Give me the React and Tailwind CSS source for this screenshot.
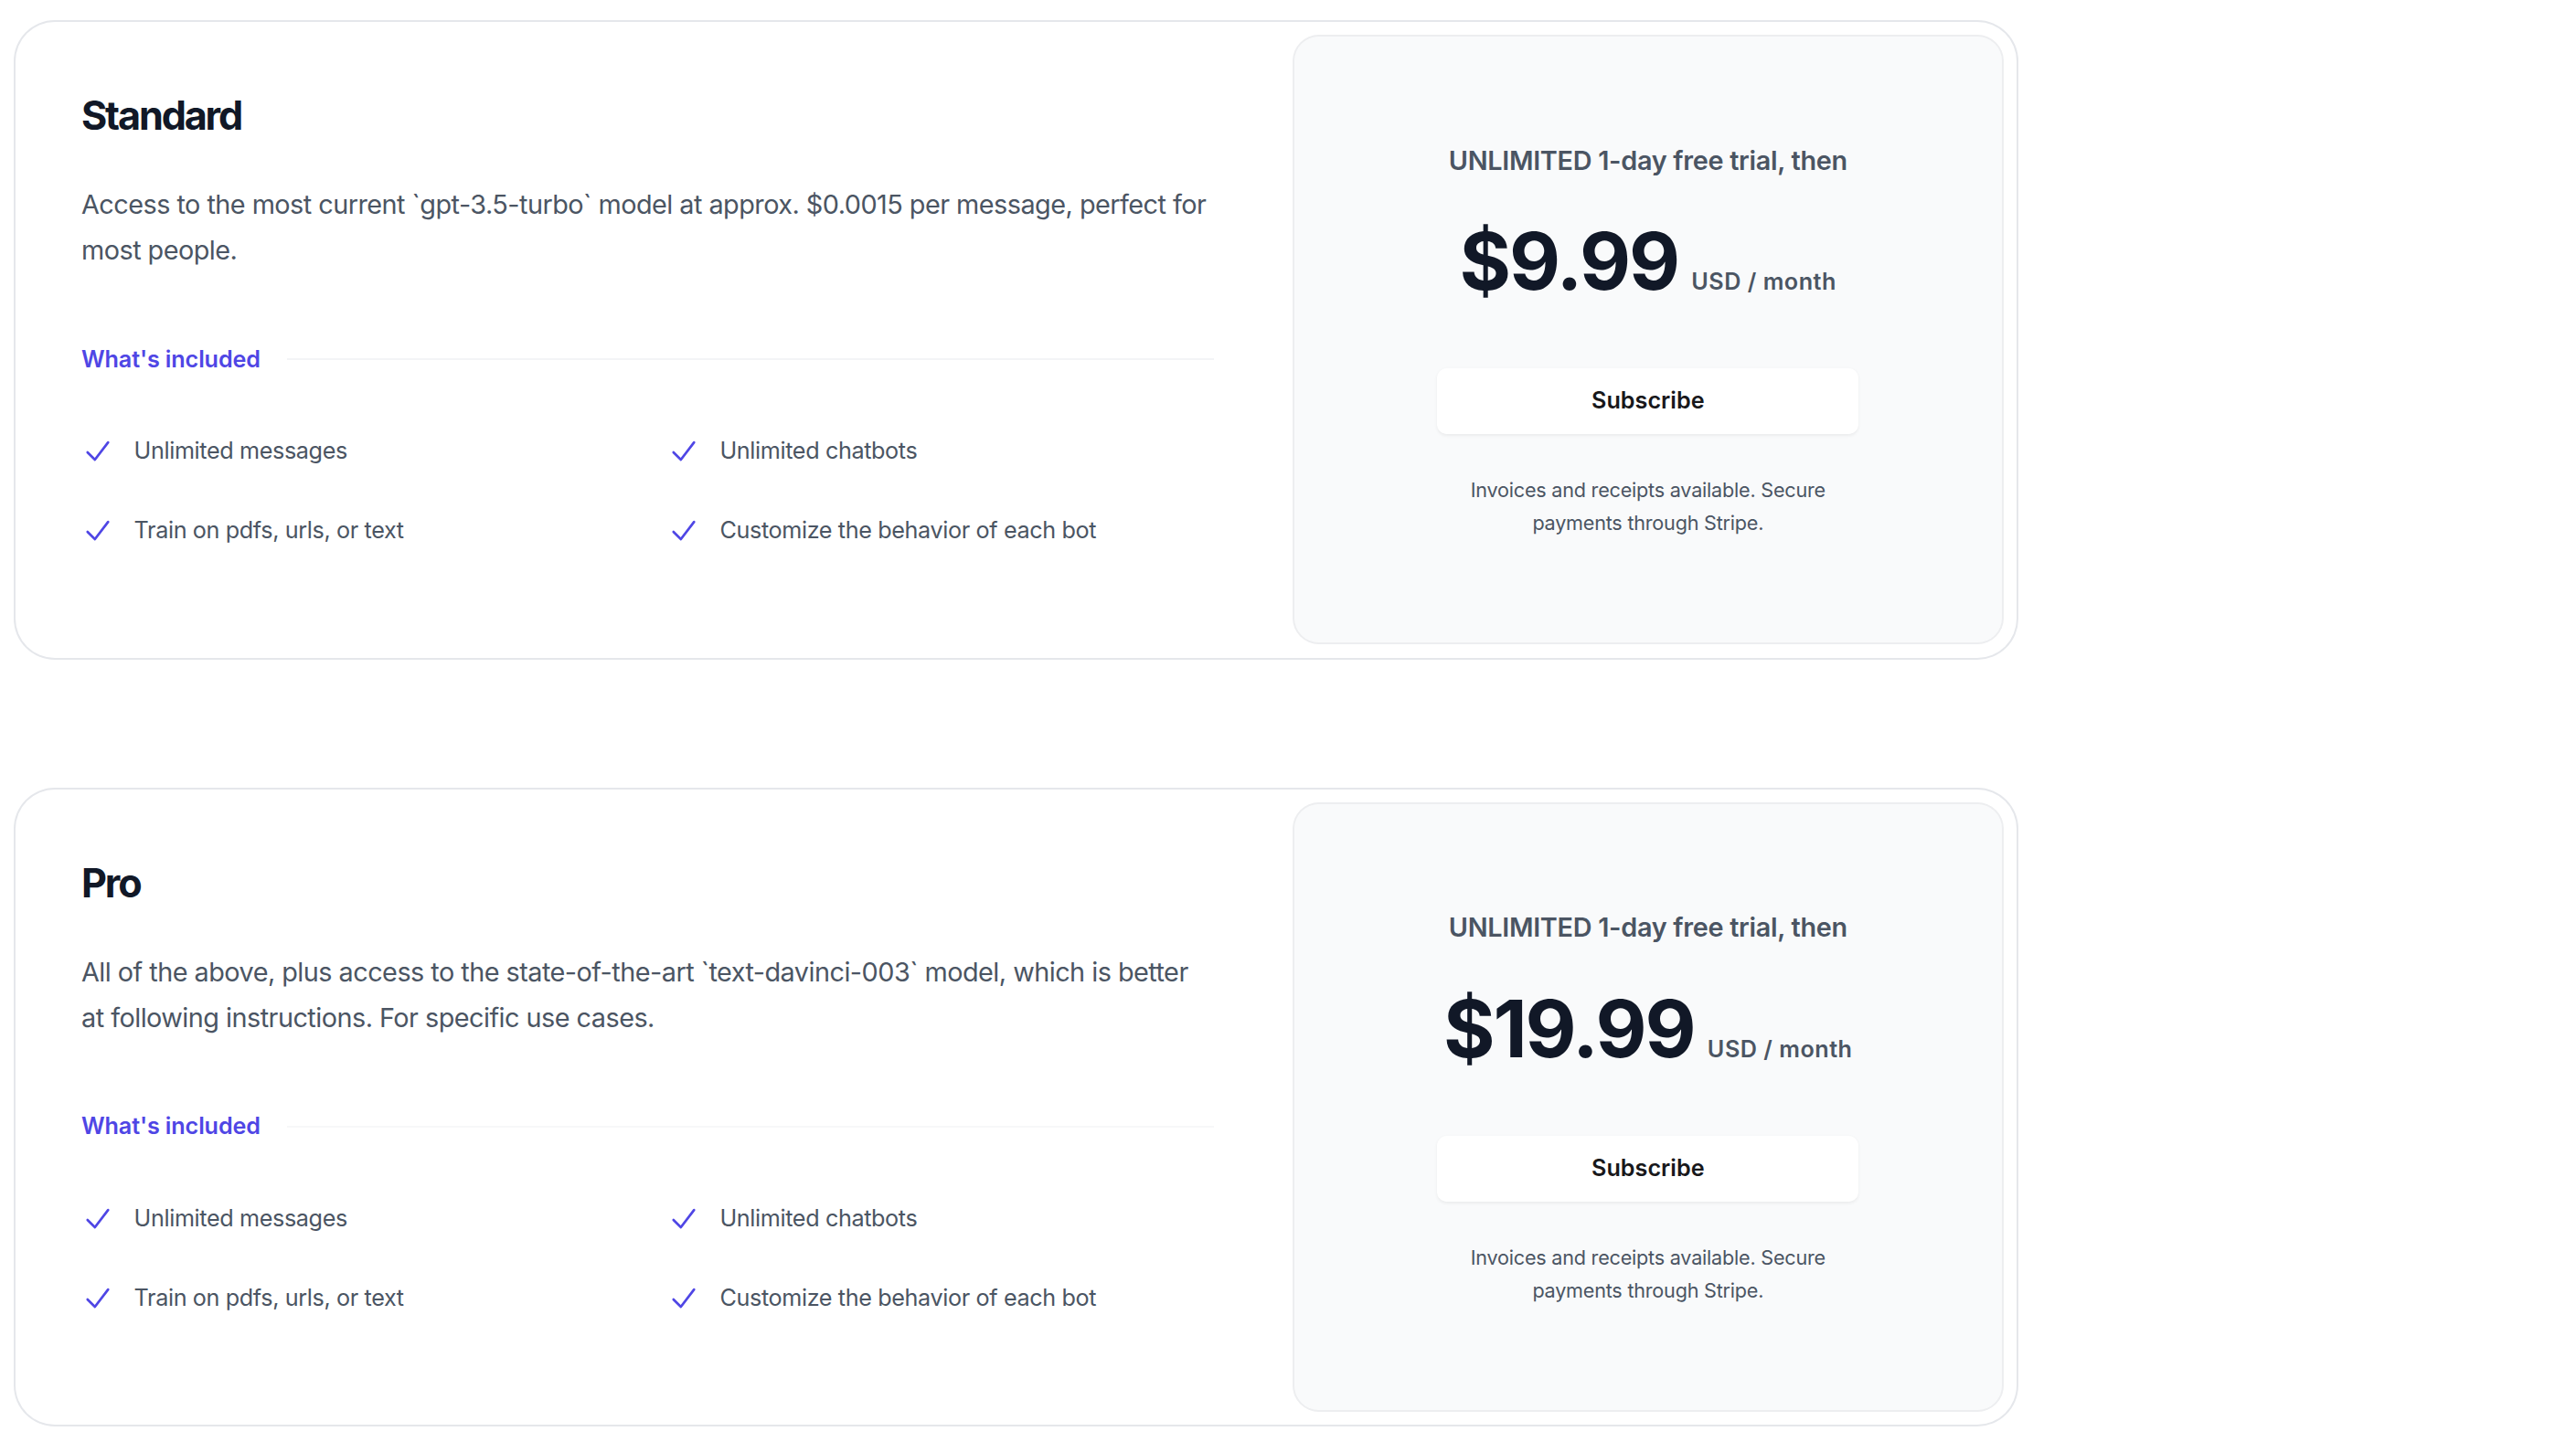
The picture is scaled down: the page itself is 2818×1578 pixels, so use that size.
import React from "react";

const features = [
  "Unlimited messages",
  "Unlimited chatbots",
  "Train on pdfs, urls, or text",
  "Customize the behavior of each bot",
];

function Check() {
  return (
    <svg viewBox="0 0 20 20" fill="currentColor" className="h-[43.2px] w-[36px] flex-none text-[#4f46e5]" aria-hidden="true">
      <path
        fillRule="evenodd"
        d="M16.704 4.153a.75.75 0 01.143 1.052l-8 10.5a.75.75 0 01-1.127.075l-4.5-4.5a.75.75 0 011.06-1.06l3.894 3.893 7.48-9.817a.75.75 0 011.05-.143z"
        clipRule="evenodd"
      />
    </svg>
  );
}

function Plan({ name, desc, price, lineColor }) {
  return (
    <div className="flex w-[2189px] rounded-[43px] bg-white shadow-[0_0_0_2px_#e5e7eb]">
      <div className="flex-auto px-[72px] pt-[74px] pb-[72px]">
        <h3 className="text-[43.2px] leading-[57.6px] font-bold tracking-[-0.05em] text-[#111827]">{name}</h3>
        <p className="mt-[43.2px] text-[28.8px] leading-[50.4px] tracking-[-0.018em] text-[#4b5563]">{desc}</p>
        <div className="mt-[72px] flex items-center gap-x-[28.8px]">
          <h4 className="flex-none text-[25.2px] leading-[43.2px] font-semibold tracking-[-0.005em] text-[#4f46e5]">What's included</h4>
          <div className={"h-[2px] flex-auto " + lineColor} />
        </div>
        <ul className="mt-[57.6px] grid grid-cols-2 gap-[43.2px] text-[25.2px] leading-[43.2px] tracking-[-0.015em] text-[#4b5563]">
          {features.map((f) => (
            <li key={f} className="flex gap-x-[21.6px]">
              <Check />
              {f}
            </li>
          ))}
        </ul>
      </div>
      <div className="w-[806.4px] flex-shrink-0 p-[14.4px]">
        <div className="flex h-full flex-col justify-center rounded-[28.8px] bg-[#f9fafb] py-[115.2px] text-center shadow-[inset_0_0_0_2px_rgba(17,24,39,0.05)]">
          <div className="mx-auto max-w-[576px] px-[57.6px]">
            <p className="text-[28.8px] leading-[43.2px] font-semibold tracking-[-0.01em] text-[#4b5563]">UNLIMITED 1-day free trial, then</p>
            <p className="mt-[43.2px] flex items-baseline justify-center gap-x-[14.4px]">
              <span className="text-[86.4px] leading-[91px] font-bold tracking-[-0.025em] text-[#111827]">{price}</span>
              <span className="text-[25.2px] leading-[43.2px] font-semibold tracking-[0.02em] text-[#4b5563]">USD / month</span>
            </p>
            <a
              href="#"
              className="mt-[72px] block w-full rounded-[10.8px] bg-white px-[21.6px] py-[14.4px] text-center text-[25.2px] leading-[43.2px] font-semibold text-[#18181b] shadow-[0_1.8px_3.6px_rgba(0,0,0,0.06)]"
            >
              Subscribe
            </a>
            <p className="mt-[43.2px] text-[21.6px] leading-[36px] tracking-[-0.01em] text-[#4b5563]">
              Invoices and receipts available. Secure payments through Stripe.
            </p>
          </div>
        </div>
      </div>
    </div>
  );
}

export default function App() {
  return (
    <div className="min-h-screen bg-white pl-[17px] pt-[24px]" style={{ fontFamily: "Inter, 'Noto Sans', sans-serif" }}>
      <div className="flex flex-col gap-y-[144px]">
        <Plan
          name="Standard"
          desc="Access to the most current `gpt-3.5-turbo` model at approx. $0.0015 per message, perfect for most people."
          price="$9.99"
          lineColor="bg-[#f3f4f6]"
        />
        <Plan
          name="Pro"
          desc="All of the above, plus access to the state-of-the-art `text-davinci-003` model, which is better at following instructions. For specific use cases."
          price="$19.99"
          lineColor="bg-[#f7f8f9]"
        />
      </div>
    </div>
  );
}
